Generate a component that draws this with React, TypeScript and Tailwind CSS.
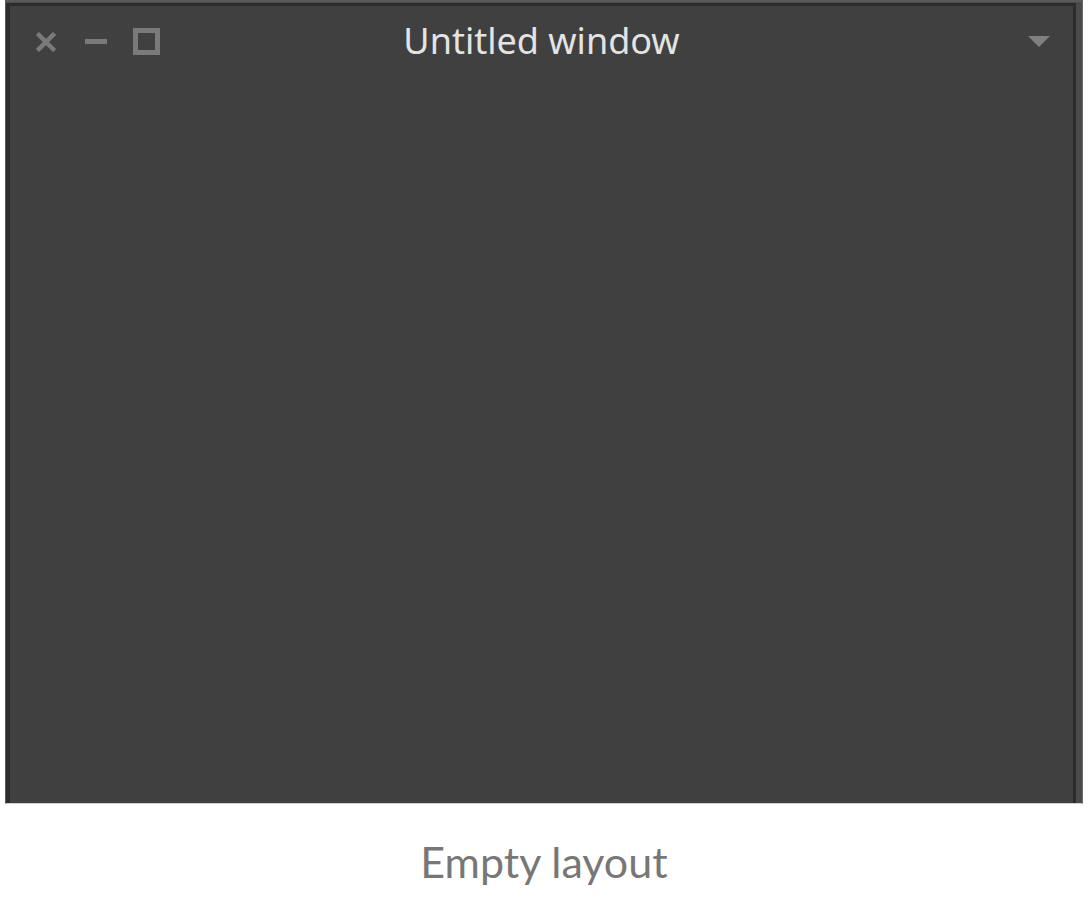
import React from "react";

export default function App() {
  return (
    <div className="w-[1088px] h-[906px] bg-white flex flex-col overflow-hidden">
      <div className="mx-[5px] h-[804px] border-t-[2px] border-l border-r border-b border-t-[#5a5a5a] border-l-[#5a5a5a] border-r-[#6a6a6a] border-b-[#cfcfcf] bg-[#4a4a4a] flex">
        <div className="flex-1 flex flex-col border-t-[3px] border-l-[4px] border-r-[3px] border-[#2c2c2c] bg-[#404040] mr-[6px] mt-[1px]">
          <div className="relative h-[70px] flex items-start">
            <div className="absolute left-[26px] top-[22px] flex items-center">
              <svg width="20" height="20" viewBox="0 0 20 20" className="mt-[1px]">
                <path d="M3 3 L17 17 M17 3 L3 17" stroke="#7a7a7a" strokeWidth="4.5" strokeLinecap="square" />
              </svg>
              <div className="ml-[29px] w-[22px] h-[5px] bg-[#7a7a7a]" />
              <div className="ml-[26px] w-[27px] h-[27px] border-[5px] border-[#7a7a7a]" />
            </div>
            <div className="flex-1 text-center pt-[13px] text-[36px] leading-[44px] text-[#e4e4e4] [font-family:'Noto_Sans',sans-serif]">
              Untitled window
            </div>
            <div className="absolute right-[23px] top-[30px] w-0 h-0 border-l-[11px] border-r-[11px] border-t-[11px] border-l-transparent border-r-transparent border-t-[#808080]" />
          </div>
        </div>
      </div>
      <div className="flex-1 flex justify-center pt-[29px]">
        <span className="text-[43px] leading-[58px] text-[#777777] [font-family:Lato,sans-serif]">Empty layout</span>
      </div>
    </div>
  );
}
